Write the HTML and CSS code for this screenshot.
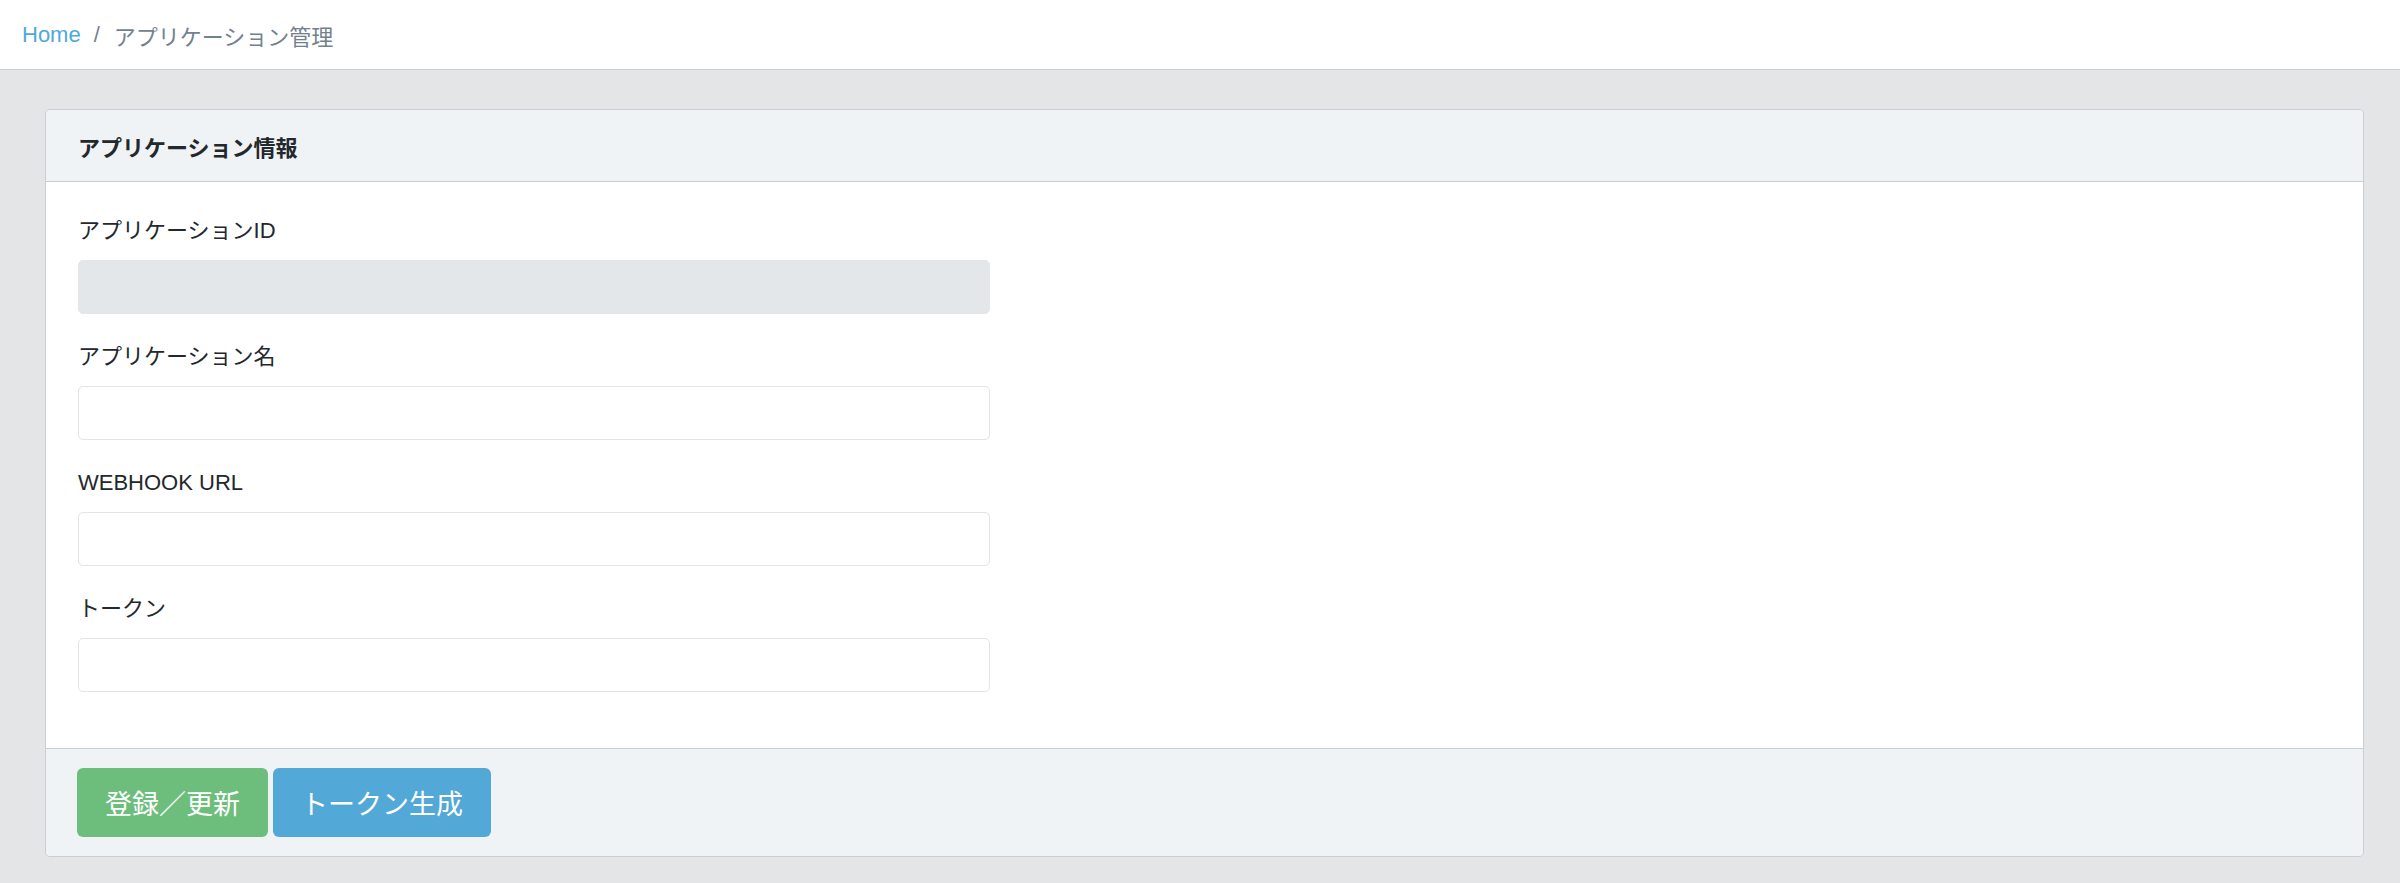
FILE: index.html
```html
<!DOCTYPE html>
<html lang="ja">
<head>
	<meta charset="UTF-8">
	<title>アプリケーション管理</title>
	<link rel="stylesheet" href="styles.css">
</head>
<body>

<div class="topbar">
	<ol class="crumbs">
		<li><a href="#">Home</a></li>
		<li class="sep">/</li>
		<li class="now">アプリケーション管理</li>
	</ol>
</div>

<div class="main">
	<div class="card">
		<div class="card-head">アプリケーション情報</div>
		<div class="card-body">
			<div class="group">
				<label>アプリケーションID</label>
				<input type="text" class="field" disabled>
			</div>
			<div class="group">
				<label>アプリケーション名</label>
				<input type="text" class="field">
			</div>
			<div class="group">
				<label>WEBHOOK URL</label>
				<input type="text" class="field">
			</div>
			<div class="group">
				<label>トークン</label>
				<input type="text" class="field">
			</div>
		</div>
		<div class="card-foot">
			<button class="btn green">登録／更新</button>
			<button class="btn blue">トークン生成</button>
		</div>
	</div>
</div>

</body>
</html>
```

FILE: styles.css
```css
body{margin: 0;padding: 0;background: #e4e5e6;font-family: "Liberation Sans", "Noto Sans CJK JP", sans-serif;font-size: 22px;color: #23282c;}
.topbar{height: 69px;background: #fff;border-bottom: 1px solid #c8ced3;display: flex;align-items: center;padding-left: 22px;}
.crumbs{list-style: none;margin: 0;padding: 0;display: flex;align-items: center;font-size: 22px;}
.crumbs a{color: #4fa9d8;text-decoration: none;}
.crumbs .sep{color: #73818f;margin: 0 14px 0 13px;}
.crumbs .now{color: #73818f;}

.main{padding: 39px 36px 26px 45px;}
.card{border: 1px solid #c8ced3;border-radius: 5px;overflow: hidden;}
.card-head{height: 71px;background: #f0f3f5;border-bottom: 1px solid #c8ced3;display: flex;align-items: center;padding: 0 32px;font-weight: bold;font-size: 22px;}
.card-body{background: #fff;padding: 33px 32px 29px;}
.group{margin-bottom: 27px;}
.group label{display: block;line-height: 32px;margin-bottom: 13px;font-size: 22px;}
.field{display: block;box-sizing: border-box;width: 912px;height: 54px;border: 1px solid #e1e4e8;border-radius: 5px;background: #fff;padding: 0 16px;font-size: 21px;}
.field:disabled{background: #e4e7ea;border-color: #e4e7ea;}

.card-foot{background: #f0f3f5;border-top: 1px solid #c8ced3;padding: 19px 31px;display: flex;gap: 5px;}
.btn{height: 69px;padding: 0 28px;border: 0;border-radius: 6px;color: #fff;font-family: "Liberation Sans", "Noto Sans CJK JP", sans-serif;font-size: 27px;}
.green{background: #6dbd7c;}
.blue{background: #52a8d6;}
```
